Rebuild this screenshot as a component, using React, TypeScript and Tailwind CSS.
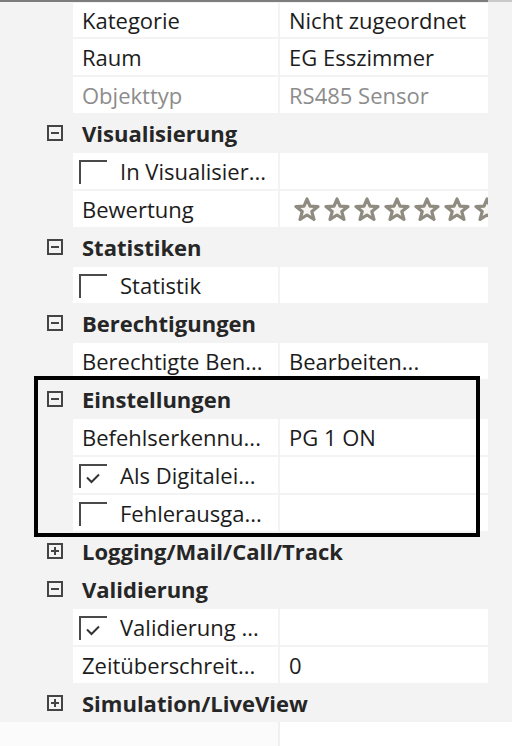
import type { ReactNode } from 'react';

type Row =
  | { kind: 'cat'; label: string; open: boolean }
  | { kind: 'prop'; label: string; value?: ReactNode; muted?: boolean; check?: boolean };

function Expander({ open }: { open: boolean }) {
  return (
    <span className="relative inline-flex h-[16px] w-[16px] items-center justify-center border-2 border-[#444]">
      <span className="h-[2px] w-[8px] bg-[#444]" />
      {!open && <span className="absolute h-[8px] w-[2px] bg-[#444]" />}
    </span>
  );
}

function Check({ checked }: { checked: boolean }) {
  return (
    <span className="relative inline-block h-[24px] w-[28px] border-l-2 border-t-2 border-[#4a4a4a]">
      {checked && (
        <svg className="absolute left-[4px] top-[6px]" width="16" height="12" viewBox="0 0 16 12">
          <path d="M2 5.5 L6.5 10 L14 2.5" fill="none" stroke="#333" strokeWidth="2" />
        </svg>
      )}
    </span>
  );
}

function Star() {
  return (
    <svg width="26" height="24" viewBox="0 0 26 24" className="shrink-0">
      <path
        d="M13 2 L16 9.2 L24 9.6 L17.8 14.6 L20 22.4 L13 18 L6 22.4 L8.2 14.6 L2 9.6 L10 9.2 Z"
        fill="#f7f6f2"
        stroke="#8f8b80"
        strokeWidth="3.2"
        strokeLinejoin="round"
      />
    </svg>
  );
}

function Stars() {
  return (
    <div className="flex items-center gap-[4px] pl-[14px]">
      {Array.from({ length: 8 }).map((_, i) => (
        <Star key={i} />
      ))}
    </div>
  );
}

const rows: Row[] = [
  { kind: 'prop', label: 'Kategorie', value: 'Nicht zugeordnet' },
  { kind: 'prop', label: 'Raum', value: 'EG Esszimmer' },
  { kind: 'prop', label: 'Objekttyp', value: 'RS485 Sensor', muted: true },
  { kind: 'cat', label: 'Visualisierung', open: true },
  { kind: 'prop', label: 'In Visualisier...', check: false },
  { kind: 'prop', label: 'Bewertung', value: <Stars /> },
  { kind: 'cat', label: 'Statistiken', open: true },
  { kind: 'prop', label: 'Statistik', check: false },
  { kind: 'cat', label: 'Berechtigungen', open: true },
  { kind: 'prop', label: 'Berechtigte Ben...', value: 'Bearbeiten...' },
  { kind: 'cat', label: 'Einstellungen', open: true },
  { kind: 'prop', label: 'Befehlserkennu...', value: 'PG 1 ON' },
  { kind: 'prop', label: 'Als Digitalei...', check: true },
  { kind: 'prop', label: 'Fehlerausga...', check: false },
  { kind: 'cat', label: 'Logging/Mail/Call/Track', open: false },
  { kind: 'cat', label: 'Validierung', open: true },
  { kind: 'prop', label: 'Validierung ...', check: true },
  { kind: 'prop', label: 'Zeitüberschreit...', value: '0' },
  { kind: 'cat', label: 'Simulation/LiveView', open: false },
];

function GridRow({ row, first }: { row: Row; first: boolean }) {
  const h = first ? 'h-[36px]' : 'h-[38px]';
  if (row.kind === 'cat') {
    return (
      <div className={`flex ${h} w-[488px] items-center`}>
        <div className="flex w-[73px] justify-end pr-[10px]">
          <Expander open={row.open} />
        </div>
        <span className="whitespace-nowrap pl-[9px] font-bold text-[#262626]">{row.label}</span>
      </div>
    );
  }
  const color = row.muted ? 'text-[#8c8c8c]' : 'text-[#1c1c1c]';
  return (
    <div className={`flex ${h} w-[488px] py-[1px]`}>
      <div className="w-[73px] shrink-0" />
      <div className={`flex w-[205px] shrink-0 items-center overflow-hidden whitespace-nowrap bg-white ${color}`}>
        {row.check !== undefined ? (
          <>
            <span className="ml-[6px] mt-[2px] flex">
              <Check checked={row.check} />
            </span>
            <span className="pl-[13px]">{row.label}</span>
          </>
        ) : (
          <span className="pl-[9px]">{row.label}</span>
        )}
      </div>
      <div className="w-[2px] shrink-0" />
      <div className={`flex w-[208px] shrink-0 items-center overflow-hidden whitespace-nowrap bg-white ${color}`}>
        {typeof row.value === 'string' ? <span className="pl-[9px]">{row.value}</span> : row.value}
      </div>
    </div>
  );
}

export default function App() {
  return (
    <div className="relative h-[746px] w-[512px] overflow-hidden bg-[#f3f3f3] text-[22px] font-['Open_Sans','Noto_Sans',sans-serif]">
      <div className="flex h-[2px]">
        <div className="w-[488px] bg-[#7d7d7d]" />
        <div className="flex-1 bg-[#c9c9c9]" />
      </div>
      <div className="flex flex-col">
        {rows.map((row, i) => (
          <GridRow key={i} row={row} first={i === 0} />
        ))}
      </div>
      <div className="flex h-[24px] bg-white">
        <div className="w-[278px] bg-[#fbfbfb]" />
        <div className="w-[2px] bg-[#f0f0f0]" />
        <div className="flex-1 bg-white" />
      </div>
      <div className="pointer-events-none absolute left-[34px] top-[376px] h-[161px] w-[446px] border-4 border-black" />
    </div>
  );
}
